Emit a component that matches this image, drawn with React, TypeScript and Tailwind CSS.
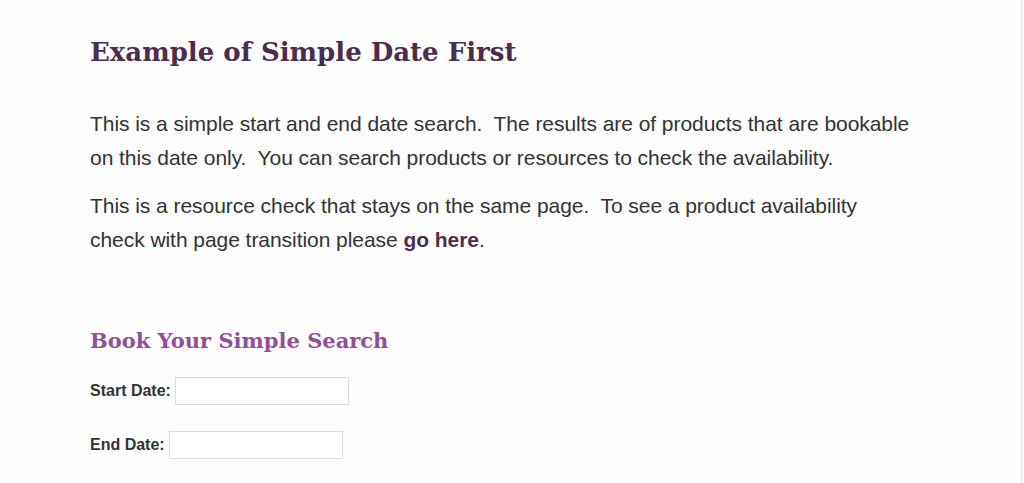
export default function App() {
  return (
    <div className="min-h-[483px] w-full bg-white flex">
      <div className="flex-1 bg-[#fdfdfd] border-r border-[#e8e8e8] mr-[2px] pl-[90px] pr-[40px] pt-[32px] font-['Liberation_Sans',Arial,sans-serif] text-[#333]">
        <h1 className="font-['DejaVu_Serif',serif] font-bold text-[26px] leading-[40px] text-[#4b2d4d]">
          Example of Simple Date First
        </h1>

        <div className="mt-[35px] text-[21px] leading-[34px] tracking-[-0.05px]">
          <p>
            This is a simple start and end date search.&nbsp; The results are of products that are bookable
            <br />
            on this date only.&nbsp; You can search products or resources to check the availability.
          </p>
          <p className="mt-[14px]">
            This is a resource check that stays on the same page.&nbsp; To see a product availability
            <br />
            check with page transition please{" "}
            <a href="#" className="font-bold text-[#4b2d4d]">go here</a>.
          </p>
        </div>

        <h2 className="mt-[69px] font-['DejaVu_Serif',serif] font-bold text-[21px] leading-[30px] text-[#8e5196]">
          Book Your Simple Search
        </h2>

        <form className="mt-[21px] text-[16px] font-bold text-[#333]">
          <div className="flex items-center gap-[4px] h-[28px]">
            <label>Start Date:</label>
            <input type="text" className="w-[174px] h-[28px] border border-[#dcdcdc] bg-white outline-none" />
          </div>
          <div className="mt-[26px] flex items-center gap-[4px] h-[28px]">
            <label>End Date:</label>
            <input type="text" className="w-[174px] h-[28px] border border-[#dcdcdc] bg-white outline-none" />
          </div>
        </form>
      </div>
    </div>
  );
}
